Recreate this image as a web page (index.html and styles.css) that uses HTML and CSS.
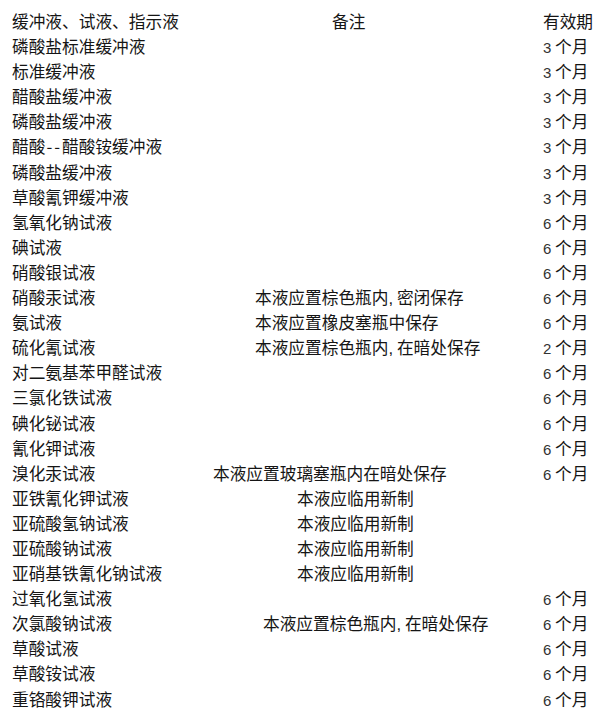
FILE: index.html
```html
<!DOCTYPE html>
<html lang="zh-CN">
<head>
<meta charset="utf-8">
<title>缓冲液、试液、指示液</title>
<link rel="stylesheet" href="styles.css">
</head>
<body>
<div class="table">
  <div class="row head">
    <div class="name">缓冲液、试液、指示液</div>
    <div class="note n-head">备注</div>
    <div class="period">有效期</div>
  </div>
  <div class="row"><div class="name">磷酸盐标准缓冲液</div><div class="note"></div><div class="period"><span class="num">3</span> 个月</div></div>
  <div class="row"><div class="name">标准缓冲液</div><div class="note"></div><div class="period"><span class="num">3</span> 个月</div></div>
  <div class="row"><div class="name">醋酸盐缓冲液</div><div class="note"></div><div class="period"><span class="num">3</span> 个月</div></div>
  <div class="row"><div class="name">磷酸盐缓冲液</div><div class="note"></div><div class="period"><span class="num">3</span> 个月</div></div>
  <div class="row"><div class="name">醋酸<span class="dash">--</span>醋酸铵缓冲液</div><div class="note"></div><div class="period"><span class="num">3</span> 个月</div></div>
  <div class="row"><div class="name">磷酸盐缓冲液</div><div class="note"></div><div class="period"><span class="num">3</span> 个月</div></div>
  <div class="row"><div class="name">草酸氰钾缓冲液</div><div class="note"></div><div class="period"><span class="num">3</span> 个月</div></div>
  <div class="row"><div class="name">氢氧化钠试液</div><div class="note"></div><div class="period"><span class="num">6</span> 个月</div></div>
  <div class="row"><div class="name">碘试液</div><div class="note"></div><div class="period"><span class="num">6</span> 个月</div></div>
  <div class="row"><div class="name">硝酸银试液</div><div class="note"></div><div class="period"><span class="num">6</span> 个月</div></div>
  <div class="row"><div class="name">硝酸汞试液</div><div class="note n-a">本液应置棕色瓶内<span class="comma">,</span> 密闭保存</div><div class="period"><span class="num">6</span> 个月</div></div>
  <div class="row"><div class="name">氨试液</div><div class="note n-a">本液应置橡皮塞瓶中保存</div><div class="period"><span class="num">6</span> 个月</div></div>
  <div class="row"><div class="name">硫化氰试液</div><div class="note n-a">本液应置棕色瓶内<span class="comma">,</span> 在暗处保存</div><div class="period"><span class="num">2</span> 个月</div></div>
  <div class="row"><div class="name">对二氨基苯甲醛试液</div><div class="note"></div><div class="period"><span class="num">6</span> 个月</div></div>
  <div class="row"><div class="name">三氯化铁试液</div><div class="note"></div><div class="period"><span class="num">6</span> 个月</div></div>
  <div class="row"><div class="name">碘化铋试液</div><div class="note"></div><div class="period"><span class="num">6</span> 个月</div></div>
  <div class="row"><div class="name">氰化钾试液</div><div class="note"></div><div class="period"><span class="num">6</span> 个月</div></div>
  <div class="row"><div class="name">溴化汞试液</div><div class="note n-b">本液应置玻璃塞瓶内在暗处保存</div><div class="period"><span class="num">6</span> 个月</div></div>
  <div class="row"><div class="name">亚铁氰化钾试液</div><div class="note n-c">本液应临用新制</div><div class="period"></div></div>
  <div class="row"><div class="name">亚硫酸氢钠试液</div><div class="note n-c">本液应临用新制</div><div class="period"></div></div>
  <div class="row"><div class="name">亚硫酸钠试液</div><div class="note n-c">本液应临用新制</div><div class="period"></div></div>
  <div class="row"><div class="name">亚硝基铁氰化钠试液</div><div class="note n-c">本液应临用新制</div><div class="period"></div></div>
  <div class="row"><div class="name">过氧化氢试液</div><div class="note"></div><div class="period"><span class="num">6</span> 个月</div></div>
  <div class="row"><div class="name">次氯酸钠试液</div><div class="note n-d">本液应置棕色瓶内<span class="comma">,</span> 在暗处保存</div><div class="period"><span class="num">6</span> 个月</div></div>
  <div class="row"><div class="name">草酸试液</div><div class="note"></div><div class="period"><span class="num">6</span> 个月</div></div>
  <div class="row"><div class="name">草酸铵试液</div><div class="note"></div><div class="period"><span class="num">6</span> 个月</div></div>
  <div class="row"><div class="name">重铬酸钾试液</div><div class="note"></div><div class="period"><span class="num">6</span> 个月</div></div>
</div>
</body>
</html>
```
FILE: styles.css
```css
html, body {
  margin: 0;
  padding: 0;
  background: #ffffff;
}

body {
  width: 594px;
  height: 723px;
  overflow: hidden;
  font-family: "Noto Sans CJK SC", "Noto Sans", sans-serif;
  font-size: 16.7px;
  color: #151515;
}

.table {
  padding: 9px 0 0 12px;
  display: flex;
  flex-direction: column;
}

.row {
  display: grid;
  grid-template-columns: 201px 330px auto;
  height: 25.1px;
  line-height: 25.1px;
  white-space: nowrap;
}

.n-head { padding-left: 119px; }
.n-a { padding-left: 42px; }
.n-b { padding-left: 0; }
.n-c { padding-left: 84px; }
.n-d { padding-left: 50px; }

.dash {
  letter-spacing: 2px;
  padding-left: 1px;
}

.comma {
  font-family: "Liberation Sans", sans-serif;
}

.num {
  font-family: "Liberation Sans", sans-serif;
  font-size: 15px;
  color: #333;
}
```
